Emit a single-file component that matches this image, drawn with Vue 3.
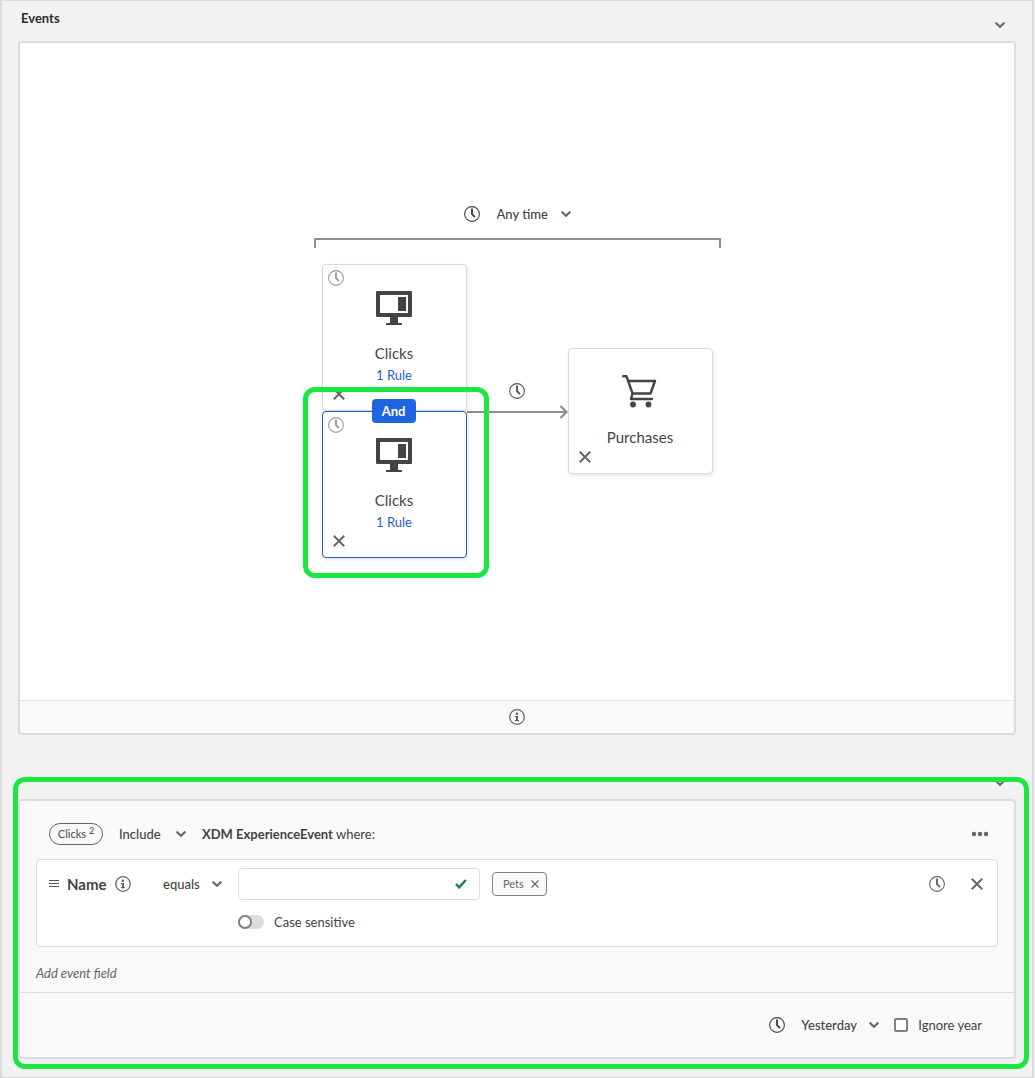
<script setup>
import { h, ref } from 'vue'

const svg = (size, children) =>
  h('svg', { width: size, height: size, viewBox: `0 0 ${size} ${size}`, fill: 'none', stroke: 'currentColor', 'aria-hidden': 'true', style: 'display:block' }, children)

const ClockIcon = () =>
  svg(16, [
    h('circle', { cx: 8, cy: 8, r: 7.4, 'stroke-width': 1.1 }),
    h('path', { d: 'M8 2.6v5.6l2.900 3', 'stroke-width': 1.9 }),
  ])

const CrossIcon = () => svg(12, [h('path', { d: 'M.8.8l10.4 10.4M11.2.8L.8 11.2', 'stroke-width': 2 })])

const SmallCrossIcon = () => svg(8, [h('path', { d: 'M.5.5l7 7M7.5.5l-7 7', 'stroke-width': 1.2 })])

const ChevronIcon = () =>
  h('svg', { width: 10, height: 6, viewBox: '0 0 10 6', fill: 'none', stroke: 'currentColor', 'aria-hidden': 'true', style: 'display:block' }, [
    h('path', { d: 'M.6.6L5 4.8 9.400.6', 'stroke-width': 2.1 }),
  ])

const InfoIcon = () =>
  svg(16, [
    h('circle', { cx: 8, cy: 8, r: 7.3, 'stroke-width': 1.3 }),
    h('circle', { cx: 7.9, cy: 4.7, r: 1.3, fill: 'currentColor', stroke: 'none' }),
    h('path', { d: 'M6 7h3v4H10V12.200H6V11H7V8.200H6z', fill: 'currentColor', stroke: 'none' }),
  ])

const clicks = [
  { id: 1, selected: false },
  { id: 2, selected: true },
]
const value = ref('')
const caseSensitive = ref(false)
const ignoreYear = ref(false)
</script>

<template>
  <main class="page">
    <header class="head">
      <h1>Events</h1>
      <button class="collapse" aria-label="Collapse events"><ChevronIcon /></button>
    </header>

    <section class="panel canvas">
      <div class="stage">
        <div class="flow">
          <label class="anytime">
            <ClockIcon />
            <span class="pick">
              <select aria-label="Time window"><option>Any time</option></select>
              <ChevronIcon />
            </span>
          </label>
          <div class="bracket"></div>
          <div class="nodes">
            <div class="stack">
              <article v-for="c in clicks" :key="c.id" class="card" :class="{ selected: c.selected }">
                <button class="card-clock" aria-label="Time rule"><ClockIcon /></button>
                <svg class="pic" width="36" height="34" viewBox="0 0 36 34" fill="#444" aria-hidden="true">
                  <path fill-rule="evenodd" d="M1 0h34a1 1 0 0 1 1 1v24a1 1 0 0 1-1 1H22v6h3a1 1 0 0 1 1 1v1H10v-1a1 1 0 0 1 1-1h3v-6H1a1 1 0 0 1-1-1V1a1 1 0 0 1 1-1zM4 4v18h28V4z" />
                  <path d="M22 6h8v14h-8z" />
                </svg>
                <span class="name">Clicks</span>
                <a href="#" class="rules">1 Rule</a>
                <button class="remove" aria-label="Remove event"><CrossIcon /></button>
                <button v-if="c.selected" class="and">And</button>
                <div v-if="c.selected" class="mark"></div>
              </article>
            </div>
            <div class="link">
              <ClockIcon />
              <div class="arrow">
                <svg width="9" height="14" viewBox="0 0 9 14" fill="none" stroke="#8e8e8e" stroke-width="2.200" aria-hidden="true">
                  <path d="M1.500 1l6 6-6 6" />
                </svg>
              </div>
            </div>
            <article class="card">
              <svg class="pic" width="36" height="34" viewBox="0 0 36 34" fill="none" stroke="#444" stroke-width="2.400" stroke-linecap="round" stroke-linejoin="round" aria-hidden="true">
                <path d="M1.300 1.300H4.500L10.500 18.500h18L33 6H6M10.500 18.500L9 24H30" />
                <circle cx="11" cy="29.500" r="2.900" fill="#444" stroke="none" />
                <circle cx="26.500" cy="29.500" r="2.900" fill="#444" stroke="none" />
              </svg>
              <span class="name">Purchases</span>
              <button class="remove" aria-label="Remove event"><CrossIcon /></button>
            </article>
          </div>
        </div>
      </div>
      <footer class="info"><button aria-label="Information"><InfoIcon /></button></footer>
    </section>

    <header class="head second">
      <button class="collapse" aria-label="Collapse rule"><ChevronIcon /></button>
    </header>

    <section class="panel rule">
      <div class="rule-head">
        <span class="pill">Clicks <sup>2</sup></span>
        <span class="pick include">
          <select aria-label="Include or exclude"><option>Include</option></select>
          <ChevronIcon />
        </span>
        <span class="where"><b>XDM ExperienceEvent</b> where:</span>
        <button class="more" aria-label="More options">
          <svg width="16" height="6" viewBox="0 0 16 6" fill="currentColor" aria-hidden="true">
            <circle cx="2" cy="3" r="2.200" /><circle cx="8" cy="3" r="2.200" /><circle cx="14" cy="3" r="2.200" />
          </svg>
        </button>
      </div>

      <div class="condition">
        <div class="field">
          <svg width="10" height="8" viewBox="0 0 10 8" fill="#555" aria-hidden="true"><path d="M0 0h10v1H0zM0 3h10v1H0zM0 6h10v1H0z" /></svg>
          <label for="value">Name</label>
          <button aria-label="About this field"><InfoIcon /></button>
        </div>
        <span class="pick operator">
          <select aria-label="Operator"><option>equals</option></select>
          <ChevronIcon />
        </span>
        <div class="value">
          <div class="entry">
            <input id="value" v-model="value" type="text" />
            <svg width="12" height="10" viewBox="0 0 12 10" fill="none" stroke="#12805c" stroke-width="2.400" aria-hidden="true"><path d="M1 5l3.200 3.400L10.800 1" /></svg>
          </div>
          <label class="switch"><input v-model="caseSensitive" type="checkbox" role="switch" />Case sensitive</label>
        </div>
        <span class="tag">Pets<button aria-label="Remove Pets"><SmallCrossIcon /></button></span>
        <div class="actions">
          <button aria-label="Time rule"><ClockIcon /></button>
          <button aria-label="Remove condition"><CrossIcon /></button>
        </div>
      </div>

      <p class="add">Add event field</p>

      <footer class="rule-foot">
        <ClockIcon />
        <span class="pick yesterday">
          <select aria-label="Event date"><option>Yesterday</option></select>
          <ChevronIcon />
        </span>
        <label class="ignore"><input v-model="ignoreYear" type="checkbox" />Ignore year</label>
      </footer>
      <div class="mark wide"></div>
    </section>
  </main>
</template>

<style>
body { background: #f2f2f2; }
</style>

<style scoped>
*, *::before { box-sizing: border-box; }
.page {
  margin-right: 1px;
  padding: 0 16px 18px;
  border: solid #dcdcdc;
  border-width: 1px 2px;
  background: #f2f2f2;
  color: #444;
  font: 400 13px/20px Lato, "Open Sans", sans-serif;
}
svg { display: block; }
button { display: block; margin: 0; padding: 0; border: 0; background: none; color: #666; font: inherit; cursor: pointer; }
.head { display: flex; justify-content: space-between; height: 40px; padding: 7px 11px 0 3px; }
.head h1 { margin: 0; font-size: 13px; line-height: 20px; font-weight: 700; color: #2c2c2c; }
.head .collapse { height: 34px; }
.head.second { height: 64px; justify-content: flex-end; padding-top: 31px; }
.panel { border: 2px solid #dcdcdc; border-radius: 4px; background: #f9f9f9; }
.stage { display: flex; justify-content: center; padding: 155px 0 142px; border-radius: 2px 2px 0 0; background: #fff; }
.info { display: flex; justify-content: center; padding: 8px 0; border-top: 1px solid #e6e6e6; }

.flow { width: 407px; }
.anytime { display: flex; align-items: center; justify-content: center; gap: 17px; height: 32px; }
.pick { display: inline-grid; align-items: center; color: #666; }
.pick > * { grid-area: 1 / 1; }
.pick > svg { justify-self: end; pointer-events: none; }
select { appearance: none; margin: 0; padding: 0 22px 0 0; border: 0; background: none; color: #444; font: inherit; font-weight: 500; outline: none; }
.bracket { height: 10px; margin-top: 8px; border: solid #8e8e8e; border-width: 2px 2px 0; }
.nodes { display: flex; align-items: center; padding: 16px 8px 0; }
.card {
  position: relative;
  display: flex;
  flex-direction: column;
  align-items: center;
  width: 145px;
  min-height: 126px;
  padding: 26px 0 7px;
  border: 1px solid #d9d9d9;
  border-radius: 4px;
  background: #fff;
  box-shadow: 1px 2px 4px rgba(0, 0, 0, 0.1);
}
.card.selected { border-color: #1b5cc8; }
.name { margin-top: 18px; font-size: 15px; }
.rules { margin-top: 2px; color: #2060cc; text-decoration: none; }
.card-clock { position: absolute; top: 5px; left: 5px; color: #999; }
.remove { align-self: flex-start; height: 18px; margin-top: auto; margin-left: 10px; }
.and {
  position: absolute;
  top: -13px;
  left: 49px;
  width: 44px;
  height: 24px;
  border-radius: 4px;
  background: #2065e0;
  color: #fff;
  font-weight: 700;
}
.mark {
  position: absolute;
  inset: -25px -23px -21px -20px;
  border: 5px solid #1ae840;
  border-radius: 12px;
  pointer-events: none;
}
.link { flex: 1; display: flex; flex-direction: column; align-items: center; gap: 6px; padding-bottom: 20px; color: #555; }
.arrow { display: flex; justify-content: flex-end; width: 100%; background: linear-gradient(#8e8e8e, #8e8e8e) 0 6px / 99% 2px no-repeat; }

.rule { position: relative; }
.mark.wide { inset: -24px -15px -12px -7px; }
.rule-head { display: flex; align-items: center; height: 58px; padding: 8px 26px 0 29px; }
.pill { width: 54px; height: 22px; border: 1px solid #666; border-radius: 11px; font-size: 11px; font-weight: 500; line-height: 20px; text-align: center; color: #555; }
.pill sup { font-size: 9px; line-height: 1; vertical-align: 4px; }
.include { width: 67px; margin: 0 16px; }
.where b { font-weight: 700; }
.more { margin-left: auto; }
.condition { display: flex; align-items: flex-start; height: 88px; margin: 0 16px; padding: 8px 14px 0 12px; border: 1px solid #dcdcdc; border-radius: 4px; background: #fff; }
.field { display: flex; align-items: center; width: 114px; height: 32px; font-size: 15px; font-weight: 700; }
.field label { width: 48px; margin-left: 8px; }
.operator { width: 59px; height: 32px; margin-right: 16px; }
.entry { display: grid; align-items: center; }
.entry > * { grid-area: 1 / 1; }
.entry svg { justify-self: end; margin-right: 13px; }
.entry input { width: 242px; height: 32px; padding: 0 32px 0 12px; border: 1px solid #dcdcdc; border-radius: 4px; background: #fff; color: #444; font: inherit; outline: none; }
.switch { display: flex; align-items: center; gap: 10px; margin-top: 12px; }
.switch input { appearance: none; width: 26px; height: 14px; margin: 0; border-radius: 7px; background: #dcdcdc; }
.switch input::before { content: ""; display: block; width: 14px; height: 14px; border: 2px solid #808080; border-radius: 50%; background: #fff; }
.switch input:checked::before { margin-left: 12px; }
.tag { display: flex; align-items: center; justify-content: space-between; width: 55px; height: 24px; margin: 4px 0 0 12px; padding: 0 7px 0 10px; border: 1px solid #808080; border-radius: 4px; background: #f9f9f9; font-size: 11px; color: #666; }
.actions { display: flex; align-items: center; gap: 26px; height: 32px; margin-left: auto; }
.add { margin: 0; padding: 16px 16px 9px; font-style: italic; color: #666; }
.rule-foot { display: flex; align-items: center; justify-content: flex-end; gap: 16px; height: 65px; padding-right: 32px; border-top: 1px solid #dcdcdc; }
.yesterday { width: 77px; }
.ignore { display: flex; align-items: center; gap: 10px; }
.ignore input { appearance: none; width: 14px; height: 14px; margin: 0; border: 2px solid #808080; border-radius: 2px; background: #fff; }
</style>
